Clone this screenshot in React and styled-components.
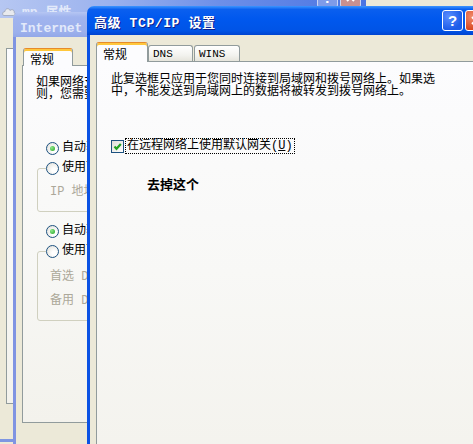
import React from "react";
import styled, { createGlobalStyle } from "styled-components";

const GlobalStyle = createGlobalStyle`
  html, body {
    margin: 0;
    padding: 0;
  }
  body {
    background: #ece9d8;
    font-family: "Liberation Mono", "Noto Sans CJK SC", monospace;
  }
`;

const Desktop = styled.div`
  position: relative;
  width: 473px;
  height: 444px;
  overflow: hidden;
  background: #ece9d8;
`;

// windows stacked on the desktop
const Window = styled.div`
  position: absolute;
  left: ${(p) => p.$left}px;
  top: ${(p) => p.$top}px;
  width: ${(p) => p.$width}px;
  height: ${(p) => p.$height}px;
  display: flex;
  flex-direction: column;
`;

const TitleBar = styled.div`
  flex: none;
  height: ${(p) => p.$h}px;
  display: flex;
  align-items: center;
  gap: 2px;
  padding: 0 5px 0 ${(p) => p.$pl}px;
  border-radius: 7px 7px 0 0;
  background: ${(p) =>
    p.$active
      ? "linear-gradient(to bottom, #3d95ff 0%, #0a5fef 12%, #0058ee 45%, #0054e6 85%, #0044d0 100%)"
      : p.$back
      ? "linear-gradient(to right, #b6c7f2 0%, #9bb2ee 30%, #6d8fe8 60%, #4a74e2 100%)"
      : "linear-gradient(to bottom, #b6c6f3 0%, #a0b4ee 20%, #9cb0ec 80%, #93a8e8 100%)"};
`;

const TitleText = styled.div`
  flex: 1;
  white-space: nowrap;
  font-size: 13px;
  font-weight: bold;
  letter-spacing: ${(p) => (p.$active ? 0.6 : 0)}px;
  color: ${(p) => (p.$active ? "#ffffff" : "#e2e9fa")};
  text-shadow: ${(p) => (p.$active ? "1px 1px 0 #0a1e8c" : "none")};
  margin-top: ${(p) => p.$dy || 0}px;
`;

const CaptionButton = styled.div`
  flex: none;
  width: 19px;
  height: 19px;
  border: 1px solid ${(p) => (p.$dim ? "#c9d4f4" : "#ffffff")};
  border-radius: 3px;
  display: flex;
  align-items: center;
  justify-content: center;
  color: #fff;
  font-family: "Liberation Sans", sans-serif;
  font-weight: bold;
  font-size: 15px;
  background: ${(p) =>
    p.$kind === "close"
      ? p.$dim
        ? "#c89090"
        : "radial-gradient(circle at 30% 30%, #f08a6a, #d8471f 70%)"
      : p.$dim
      ? "#7f9be8"
      : "radial-gradient(circle at 30% 30%, #5a8dff, #1d5ce8 70%)"};
  align-self: ${(p) => (p.$top ? "flex-start" : "center")};
  margin-top: ${(p) => p.$mt || 0}px;
`;

const Body = styled.div`
  flex: 1;
  display: flex;
  flex-direction: column;
  background: #ece9d8;
  border-left: ${(p) => p.$frame};
  border-bottom: ${(p) => p.$frameBottom || "none"};
  padding: ${(p) => p.$pt}px 0 0 ${(p) => p.$pl}px;
`;

const TabRow = styled.div`
  display: flex;
  align-items: flex-end;
  margin-bottom: -1px;
  padding-left: ${(p) => p.$pl || 0}px;
  position: relative;
  z-index: 1;
`;

const Tab = styled.div`
  box-sizing: border-box;
  width: ${(p) => p.$w}px;
  height: ${(p) => (p.$active ? p.$h : p.$h - 4)}px;
  margin-bottom: ${(p) => (p.$active ? 0 : 1)}px;
  margin-left: ${(p) => p.$ml || 0}px;
  border: 1px solid #919b9c;
  border-bottom: none;
  border-radius: 3px 3px 0 0;
  font-size: ${(p) => (p.$active ? 12 : 11)}px;
  color: #000;
  padding-left: ${(p) => (p.$active ? 6 : 4)}px;
  display: flex;
  align-items: center;
  white-space: nowrap;
  background: ${(p) =>
    p.$active ? "#fcfcfe" : "linear-gradient(to bottom, #ffffff, #f3f3ef 60%, #e6e5dc)"};
  ${(p) =>
    p.$active &&
    `
    border-top: 1px solid #e68b2c;
    box-shadow: inset 0 2px 0 #ffc73c;
    padding-top: 2px;
  `}
`;

const Panel = styled.div`
  box-sizing: border-box;
  width: ${(p) => p.$w}px;
  height: ${(p) => p.$h}px;
  border: 1px solid #919b9c;
  background: linear-gradient(to bottom, #fcfcfe 0%, #f8f8f6 50%, #f3f2ec 100%);
  padding: ${(p) => p.$pt}px 0 0 ${(p) => p.$pl}px;
  font-size: 12px;
  color: #000;
`;

const Para = styled.div`
  line-height: 12px;
  white-space: nowrap;
`;

const Row = styled.div`
  display: flex;
  align-items: center;
  height: 14px;
  margin-top: ${(p) => p.$mt || 0}px;
  margin-left: ${(p) => p.$ml || 0}px;
  white-space: nowrap;
  line-height: 12px;
`;

const Radio = styled.span`
  box-sizing: border-box;
  flex: none;
  width: 13px;
  height: 13px;
  border-radius: 50%;
  border: 1px solid #1c5180;
  background: radial-gradient(circle at 65% 65%, #ffffff 20%, #e6e5df 80%);
  margin-right: 3px;
  display: flex;
  align-items: center;
  justify-content: center;
  &::after {
    content: "";
    display: ${(p) => (p.$on ? "block" : "none")};
    width: 5px;
    height: 5px;
    border-radius: 50%;
    background: radial-gradient(circle at 35% 35%, #8ee88a, #21a121);
  }
`;

const Group = styled.fieldset`
  box-sizing: border-box;
  width: 340px;
  margin: ${(p) => p.$mt}px 0 0 1px;
  padding: 0 0 ${(p) => p.$pb}px 8px;
  border: 1px solid #d0d0bf;
  border-radius: 3px;
  min-width: 0;
  legend {
    padding: 0;
    margin: 0;
  }
`;

const GrayLabel = styled.div`
  color: #aca899;
  height: 12px;
  line-height: 12px;
  padding-left: 4px;
  margin-top: ${(p) => p.$mt}px;
  white-space: nowrap;
`;

const CheckBox = styled.span`
  box-sizing: border-box;
  flex: none;
  width: 13px;
  height: 13px;
  border: 1px solid #1c5180;
  background: linear-gradient(135deg, #dcdcd7, #ffffff);
  display: flex;
  margin-right: 2px;
`;

const FocusLabel = styled.span`
  outline: 1px dotted #000;
  outline-offset: 0;
  padding: 1px 1px;
  line-height: 12px;
`;

const Note = styled.div`
  font-size: 13px;
  font-weight: bold;
  line-height: 14px;
  margin: 24px 0 0 36px;
  font-family: "Noto Sans CJK SC", sans-serif;
`;

const Cloud = styled.svg`
  flex: none;
  margin: 19px 4px 0 -2px;
  align-self: flex-start;
`;

export default function App() {
  return (
    <Desktop>
      <GlobalStyle />

      {/* back-most property sheet */}
      <Window $left={0} $top={-12} $width={366} $height={454}>
        <TitleBar $h={30} $pl={4} $back>
          <Cloud width="14" height="9" viewBox="0 0 14 9">
            <path d="M2 8.5 C0 8.5 0 4.5 3 4.5 C3 1.5 7 0.5 8 3.5 C10 1.5 13 3.5 12 5.5 C14 6.5 13 8.5 11 8.5 Z" fill="#e8eaee" stroke="#9aa3b5" strokeWidth="0.8" />
          </Cloud>
          <TitleText $dy={14}>mp 属性</TitleText>
          <CaptionButton $dim $top $mt={-1}>?</CaptionButton>
          <CaptionButton $dim $top $mt={-1} $kind="close">
            <svg width="9" height="9" viewBox="0 0 9 9"><path d="M1 1 L8 8 M8 1 L1 8" stroke="#fff" strokeWidth="2" /></svg>
          </CaptionButton>
        </TitleBar>
        <Body $frame="none" $frameBottom="3px solid #7e96e2" $pt={30} $pl={6}>
          <Panel $w={350} $h={356} $pt={0} $pl={0} />
        </Body>
      </Window>

      {/* Internet protocol properties */}
      <Window $left={13} $top={12} $width={420} $height={470}>
        <TitleBar $h={25} $pl={7}>
          <TitleText $dy={4}>Internet 协议 (TCP/IP) 属性</TitleText>
        </TitleBar>
        <Body $frame="3px solid #8094e2" $pt={11} $pl={6}>
          <TabRow $pl={1}>
            <Tab $active $w={50} $h={18}>常规</Tab>
          </TabRow>
          <Panel $w={400} $h={358} $pt={11} $pl={13}>
            <Para>
              如果网络支持此功能，则可以获取自动指派的 IP 设置。否
              <br />
              则，您需要从网络系统管理员处获得适当的 IP 设置。
            </Para>
            <Row $mt={40} $ml={10}>
              <Radio $on />
              自动获得 IP 地址(O)
            </Row>
            <Group $mt={6} $pb={13}>
              <legend>
                <Row>
                  <Radio />
                  使用下面的 IP 地址(S):
                </Row>
              </legend>
              <GrayLabel $mt={11}>IP 地址(I):</GrayLabel>
            </Group>
            <Row $mt={12} $ml={10}>
              <Radio $on />
              自动获得 DNS 服务器地址(B)
            </Row>
            <Group $mt={6} $pb={13}>
              <legend>
                <Row>
                  <Radio />
                  使用下面的 DNS 服务器地址(E):
                </Row>
              </legend>
              <GrayLabel $mt={13}>首选 DNS 服务器(P):</GrayLabel>
              <GrayLabel $mt={12}>备用 DNS 服务器(A):</GrayLabel>
            </Group>
          </Panel>
        </Body>
      </Window>

      {/* active dialog */}
      <Window $left={87} $top={6} $width={404} $height={470}>
        <TitleBar $h={29} $pl={7} $active>
          <TitleText $active $dy={1}>高级 TCP/IP 设置</TitleText>
          <CaptionButton>?</CaptionButton>
          <CaptionButton $kind="close">
            <svg width="9" height="9" viewBox="0 0 9 9"><path d="M1 1 L8 8 M8 1 L1 8" stroke="#fff" strokeWidth="2" /></svg>
          </CaptionButton>
        </TitleBar>
        <Body $frame="3px solid #0b52e4" $pt={7} $pl={6}>
          <TabRow>
            <Tab $active $w={52} $h={20}>常规</Tab>
            <Tab $w={45} $h={20}>DNS</Tab>
            <Tab $w={46} $h={20} $ml={1}>WINS</Tab>
          </TabRow>
          <Panel $w={392} $h={420} $pt={12} $pl={14}>
            <Para>
              此复选框只应用于您同时连接到局域网和拨号网络上。如果选
              <br />
              中，不能发送到局域网上的数据将被转发到拨号网络上。
            </Para>
            <Row $mt={41}>
              <CheckBox>
                <svg width="11" height="11" viewBox="0 0 11 11">
                  <path d="M2.5 5.5 L4.5 7.8 L8.8 3" fill="none" stroke="#21a121" strokeWidth="2.2" />
                </svg>
              </CheckBox>
              <FocusLabel>
                在远程网络上使用默认网关(<u>U</u>)
              </FocusLabel>
            </Row>
            <Note>去掉这个</Note>
          </Panel>
        </Body>
      </Window>
    </Desktop>
  );
}
